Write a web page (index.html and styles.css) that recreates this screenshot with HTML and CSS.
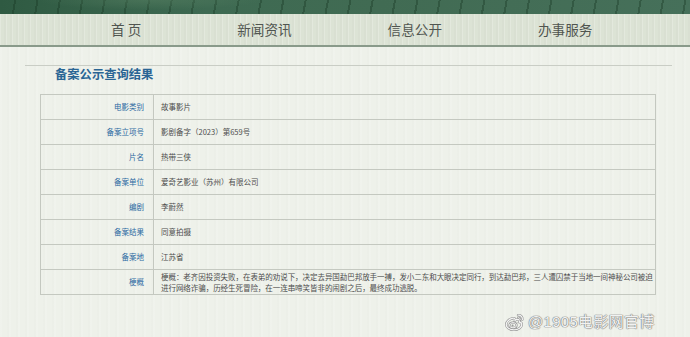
FILE: index.html
```html
<!DOCTYPE html>
<html lang="zh-CN">
<head>
<meta charset="utf-8">
<title>备案公示查询结果</title>
<link rel="stylesheet" href="styles.css">
</head>
<body>
<header class="banner"></header>
<nav class="nav">
  <a class="nav-item" href="#">首 页</a>
  <a class="nav-item" href="#">新闻资讯</a>
  <a class="nav-item" href="#">信息公开</a>
  <a class="nav-item" href="#">办事服务</a>
</nav>
<main class="content">
  <section class="panel">
    <h1 class="panel-title">备案公示查询结果</h1>
  </section>
  <div class="record">
    <div class="row"><div class="label">电影类别</div><div class="value">故事影片</div></div>
    <div class="row"><div class="label">备案立项号</div><div class="value">影剧备字（2023）第659号</div></div>
    <div class="row"><div class="label">片名</div><div class="value">热带三侠</div></div>
    <div class="row"><div class="label">备案单位</div><div class="value">爱奇艺影业（苏州）有限公司</div></div>
    <div class="row"><div class="label">编剧</div><div class="value">李蔚然</div></div>
    <div class="row"><div class="label">备案结果</div><div class="value">同意拍摄</div></div>
    <div class="row"><div class="label">备案地</div><div class="value">江苏省</div></div>
    <div class="row row-tall"><div class="label">梗概</div><div class="value">梗概：老齐因投资失败，在表弟的劝说下，决定去异国勐巴邦放手一搏，发小二东和大眼决定同行，到达勐巴邦，三人遭囚禁于当地一间神秘公司被迫进行网络诈骗，历经生死冒险，在一连串啼笑皆非的闹剧之后，最终成功逃脱。</div></div>
  </div>
</main>
<div class="watermark">
  <svg class="wb-logo" width="20" height="18" viewBox="0 0 20 18" aria-hidden="true">
    <path d="M8.2 5.2C4.6 5.6 1.2 8.6 1.2 11.6c0 3 3.4 5.2 7.6 5.2 4.6 0 8-2.6 8-5.2 0-1.6-1.4-2.4-2.6-2.6.6-1.4.2-2.8-1.6-2.6-1 .1-2 .6-2.6 1 .4-1.6-.4-2.5-1.8-2.2z" fill="none" stroke="#8e8e8e" stroke-width="2.4"/>
    <path d="M8.2 5.2C4.6 5.6 1.2 8.6 1.2 11.6c0 3 3.4 5.2 7.6 5.2 4.6 0 8-2.6 8-5.2 0-1.6-1.4-2.4-2.6-2.6.6-1.4.2-2.8-1.6-2.6-1 .1-2 .6-2.6 1 .4-1.6-.4-2.5-1.8-2.2z" fill="none" stroke="#f4f4f4" stroke-width="1.3"/>
    <ellipse cx="8" cy="12.2" rx="3.6" ry="2.6" fill="none" stroke="#8e8e8e" stroke-width="2"/>
    <ellipse cx="8" cy="12.2" rx="3.6" ry="2.6" fill="none" stroke="#f4f4f4" stroke-width="1"/>
    <circle cx="7.6" cy="12.4" r="1" fill="#9a9a9a"/>
    <path d="M13 2.2c2.4-.4 4.8 1.6 4.4 4.4" fill="none" stroke="#8e8e8e" stroke-width="2.3" stroke-linecap="round"/>
    <path d="M13 2.2c2.4-.4 4.8 1.6 4.4 4.4" fill="none" stroke="#f4f4f4" stroke-width="1.2" stroke-linecap="round"/>
    <path d="M13.2 4.6c1.2-.2 2.2.8 2 2" fill="none" stroke="#8e8e8e" stroke-width="2.1" stroke-linecap="round"/>
    <path d="M13.2 4.6c1.2-.2 2.2.8 2 2" fill="none" stroke="#f4f4f4" stroke-width="1" stroke-linecap="round"/>
  </svg>
  <span class="wb-text">@1905电影网官博</span>
</div>
</body>
</html>
```

FILE: styles.css
```css
* { box-sizing: border-box; }

html, body {
  margin: 0;
  padding: 0;
}

body {
  width: 690px;
  height: 337px;
  overflow: hidden;
  position: relative;
  font-family: "Noto Sans CJK SC", "Noto Sans", sans-serif;
  background-color: #eef1ea;
  background-image: repeating-linear-gradient(90deg, rgba(255,255,255,0.12) 0 2px, transparent 2px 7px, rgba(0,0,0,0.008) 7px 9px);
}

.banner {
  height: 14px;
  background-color: #3f6850;
  background-image:
    radial-gradient(ellipse 160px 14px at 150px 0, rgba(90,130,100,0.45), transparent 70%),
    repeating-linear-gradient(100deg, transparent 0 14px, rgba(20,50,30,0.35) 14px 16px, transparent 16px 22px),
    linear-gradient(90deg, #2f5a42 0%, #3e6a52 30%, #416b53 55%, #46705a 100%);
}

.nav {
  height: 33px;
  display: flex;
  align-items: center;
  gap: 96px;
  padding: 0 0 2px 111px;
  background-color: #dce3d5;
  background-image: repeating-linear-gradient(90deg, rgba(255,255,255,0.2) 0 1px, transparent 1px 4px, rgba(0,0,0,0.015) 4px 6px);
  border-bottom: 2px solid #899a8a;
}

.nav-item {
  color: #505550;
  font-size: 13.6px;
  line-height: 16px;
  text-decoration: none;
  white-space: pre;
}

.content {
  padding-top: 18px;
}

.panel {
  margin: 0 18px 0 25px;
  border-top: 1px solid #c9cdc5;
}

.panel-title {
  margin: 0;
  padding-left: 30px;
  font-size: 12.3px;
  line-height: 16px;
  font-weight: bold;
  color: #2a6594;
}

.record {
  margin: 12px 0 0 40px;
  width: 616px;
  border: 1px solid #c4c8c0;
  border-bottom: none;
}

.row {
  display: grid;
  grid-template-columns: 113px 1fr;
  height: 25px;
  border-bottom: 1px solid #c4c8c0;
  font-size: 7.5px;
  line-height: 24px;
}

.label {
  text-align: right;
  padding-right: 9px;
  color: #2c6aa2;
  border-right: 1px solid #c4c8c0;
}

.value {
  padding-left: 7px;
  color: #4d4d4d;
}

.row-tall {
  height: 25px;
}

.row-tall .label {
  line-height: 24px;
}

.row-tall .value {
  line-height: 11px;
  padding-top: 1px;
  padding-right: 2px;
  letter-spacing: -0.05px;
}

.watermark {
  position: absolute;
  left: 505px;
  top: 312px;
  display: flex;
  align-items: center;
  gap: 3px;
}

.wb-text {
  font-family: "Liberation Sans", "Noto Sans CJK SC", sans-serif;
  font-size: 15px;
  line-height: 20px;
  color: #f2f2f2;
  text-shadow: 0 0 1px #7a7a7a, 0 0 1px #7a7a7a, 0 0 1px #7a7a7a;
  letter-spacing: 0.3px;
}
```
